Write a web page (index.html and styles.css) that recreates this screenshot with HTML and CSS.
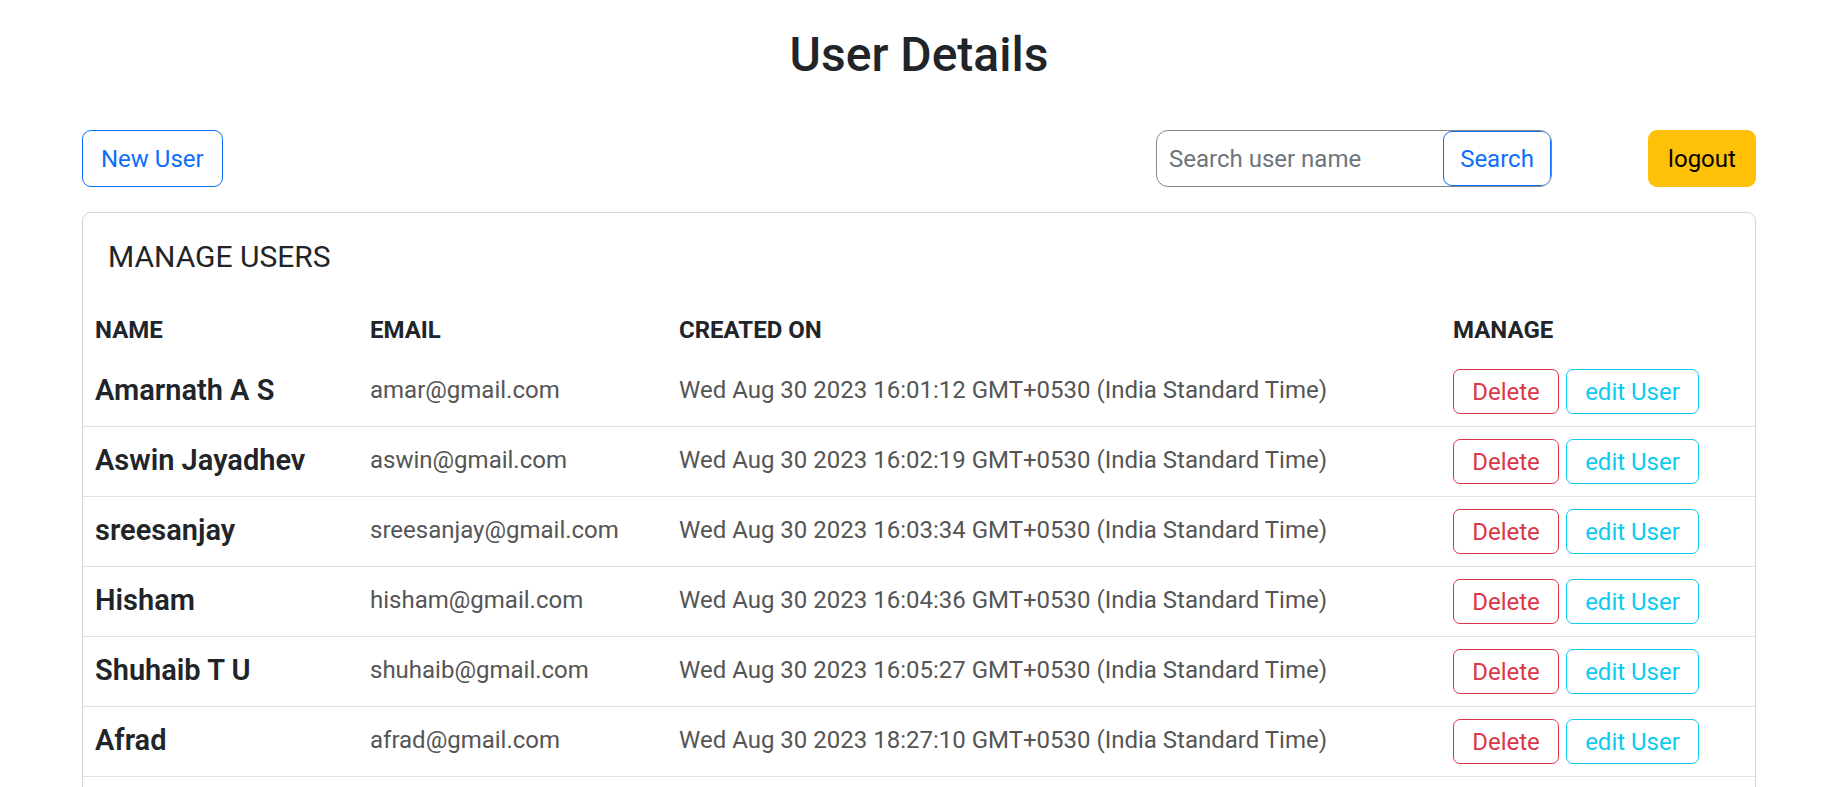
FILE: index.html
```html
<!DOCTYPE html>
<html lang="en">
<head>
<meta charset="utf-8">
<title>User Details</title>
<link rel="stylesheet" href="styles.css">
</head>
<body>
<div class="container">
  <h2 class="page-title">User Details</h2>
  <div class="toolbar">
    <button class="btn btn-outline-primary">New User</button>
    <form class="search-group">
      <input class="search-input" type="text" placeholder="Search user name">
      <button class="btn btn-outline-primary search-btn" type="button">Search</button>
    </form>
    <button class="btn btn-warning">logout</button>
  </div>
  <div class="card">
    <h5 class="card-title">MANAGE USERS</h5>
    <table class="table">
      <colgroup>
        <col class="col-name"><col class="col-email"><col class="col-date"><col class="col-manage">
      </colgroup>
      <thead>
        <tr><th>NAME</th><th>EMAIL</th><th>CREATED ON</th><th>MANAGE</th></tr>
      </thead>
      <tbody>
        <tr>
          <td class="name">Amarnath A S</td><td class="muted">amar@gmail.com</td>
          <td class="muted">Wed Aug 30 2023 16:01:12 GMT+0530 (India Standard Time)</td>
          <td><div class="actions"><button class="btn-sm btn-outline-danger">Delete</button><button class="btn-sm btn-outline-info">edit User</button></div></td>
        </tr>
        <tr>
          <td class="name">Aswin Jayadhev</td><td class="muted">aswin@gmail.com</td>
          <td class="muted">Wed Aug 30 2023 16:02:19 GMT+0530 (India Standard Time)</td>
          <td><div class="actions"><button class="btn-sm btn-outline-danger">Delete</button><button class="btn-sm btn-outline-info">edit User</button></div></td>
        </tr>
        <tr>
          <td class="name">sreesanjay</td><td class="muted">sreesanjay@gmail.com</td>
          <td class="muted">Wed Aug 30 2023 16:03:34 GMT+0530 (India Standard Time)</td>
          <td><div class="actions"><button class="btn-sm btn-outline-danger">Delete</button><button class="btn-sm btn-outline-info">edit User</button></div></td>
        </tr>
        <tr>
          <td class="name">Hisham</td><td class="muted">hisham@gmail.com</td>
          <td class="muted">Wed Aug 30 2023 16:04:36 GMT+0530 (India Standard Time)</td>
          <td><div class="actions"><button class="btn-sm btn-outline-danger">Delete</button><button class="btn-sm btn-outline-info">edit User</button></div></td>
        </tr>
        <tr>
          <td class="name">Shuhaib T U</td><td class="muted">shuhaib@gmail.com</td>
          <td class="muted">Wed Aug 30 2023 16:05:27 GMT+0530 (India Standard Time)</td>
          <td><div class="actions"><button class="btn-sm btn-outline-danger">Delete</button><button class="btn-sm btn-outline-info">edit User</button></div></td>
        </tr>
        <tr>
          <td class="name">Afrad</td><td class="muted">afrad@gmail.com</td>
          <td class="muted">Wed Aug 30 2023 18:27:10 GMT+0530 (India Standard Time)</td>
          <td><div class="actions"><button class="btn-sm btn-outline-danger">Delete</button><button class="btn-sm btn-outline-info">edit User</button></div></td>
        </tr>
      </tbody>
    </table>
  </div>
</div>
</body>
</html>
```
FILE: styles.css
```css
* { box-sizing: border-box; }
html, body { margin: 0; padding: 0; background: #fff; }
body {
  font-family: Roboto, "Open Sans", "Liberation Sans", sans-serif;
  color: #212529;
  font-size: 24px;
  overflow: hidden;
}
.container {
  width: 1674px;
  margin-left: 82px;
  padding-top: 26px;
}
.page-title {
  margin: 0;
  text-align: center;
  font-size: 48px;
  font-weight: 500;
  line-height: 58px;
}
.toolbar {
  display: flex;
  align-items: center;
  margin-top: 46px;
  height: 57px;
}
.btn {
  font-family: inherit;
  font-size: 24px;
  line-height: 36px;
  padding: 9px 18px;
  border: 1.5px solid transparent;
  border-radius: 9px;
  background: #fff;
  height: 57px;
  cursor: pointer;
}
.btn-outline-primary { color: #0d6efd; border-color: #0d6efd; }
.btn-warning { background: #ffc107; border-color: #ffc107; color: #000; width: 108px; padding: 9px 0; }
.search-group {
  display: flex;
  margin: 0 96px 0 auto;
  width: 396px;
  height: 57px;
  border: 1.5px solid #858585;
  border-radius: 12px;
  overflow: hidden;
}
.search-input {
  flex: 1;
  min-width: 0;
  border: none;
  outline: none;
  font-family: inherit;
  font-size: 24px;
  padding: 0 12px;
  color: #212529;
  background: transparent;
}
.search-input::placeholder { color: #6c757d; }
.search-btn {
  height: 100%;
  width: 108px;
  padding: 0;
  line-height: 1;
}
.card {
  margin-top: 25px;
  border: 1.5px solid #d5d5d5;
  border-radius: 9px;
  padding-bottom: 80px;
}
.card-title {
  margin: 0;
  padding: 26px 24px 0 25px;
  font-size: 30px;
  font-weight: 400;
  line-height: 36px;
  height: 83px;
}
.table {
  width: 100%;
  border-collapse: collapse;
  table-layout: fixed;
}
.col-name { width: 275px; }
.col-email { width: 309px; }
.col-date { width: 774px; }
.table th {
  text-align: left;
  font-weight: 700;
  font-size: 24px;
  line-height: 36px;
  padding: 16px 12px 9px;
  vertical-align: bottom;
}
.table td {
  padding: 12px;
  vertical-align: middle;
  border-bottom: 1px solid #dee2e6;
  line-height: 36px;
  white-space: nowrap;
}
.table td.name,
.table td.muted {
  padding: 10px 12px 14px;
}
.table td.name {
  font-size: 29px;
  font-weight: 600;
}
.table td.muted { color: #555; font-size: 24px; }
.actions { display: flex; gap: 7px; }
.btn-sm {
  font-family: inherit;
  font-size: 24px;
  height: 45px;
  line-height: 42px;
  padding: 0 18px;
  border-radius: 7px;
  background: #fff;
  border: 1.5px solid;
}
.btn-outline-danger { color: #dc3545; border-color: #dc3545; width: 106px; padding: 0; }
.btn-outline-info { color: #0dcaf0; border-color: #0dcaf0; width: 133px; padding: 0; }
```
